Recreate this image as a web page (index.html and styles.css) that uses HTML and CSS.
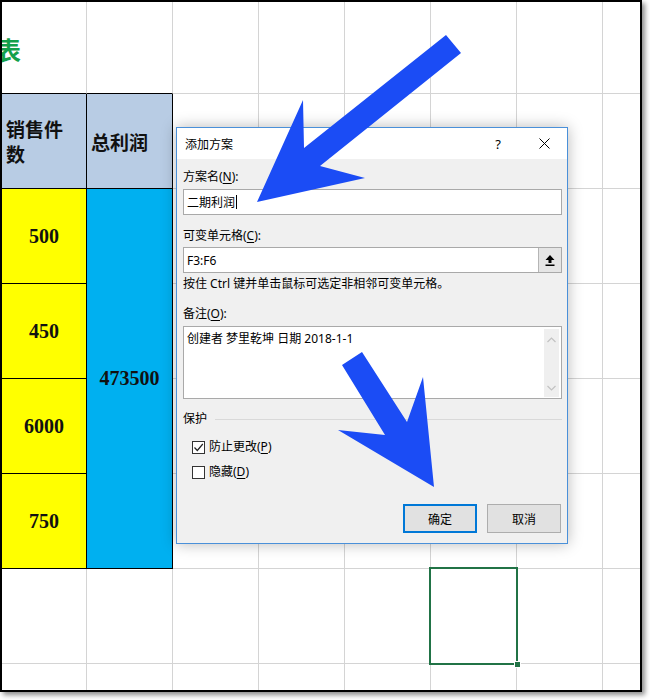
FILE: index.html
```html
<!DOCTYPE html>
<html lang="zh-CN">
<head>
<meta charset="utf-8">
<title>添加方案</title>
<link rel="stylesheet" href="styles.css">
</head>
<body>
<div class="screen">
  <div class="sheet">
    <div class="c title tb"><span class="title-char">表</span></div>
    <div class="c tb"></div><div class="c"></div><div class="c"></div><div class="c"></div><div class="c"></div><div class="c"></div><div class="c nr"></div>

    <div class="c hd hd-a">销售件数</div>
    <div class="c hd hd-b">总利润</div>
    <div class="c"></div><div class="c"></div><div class="c"></div><div class="c"></div><div class="c"></div><div class="c nr"></div>

    <div class="c y num">500</div>
    <div class="c cy num merged">473500</div>
    <div class="c"></div><div class="c"></div><div class="c"></div><div class="c"></div><div class="c"></div><div class="c nr"></div>

    <div class="c y num">450</div>
    <div class="c"></div><div class="c"></div><div class="c"></div><div class="c"></div><div class="c"></div><div class="c nr"></div>

    <div class="c y num">6000</div>
    <div class="c"></div><div class="c"></div><div class="c"></div><div class="c"></div><div class="c"></div><div class="c nr"></div>

    <div class="c y num">750</div>
    <div class="c"></div><div class="c"></div><div class="c"></div><div class="c"></div><div class="c"></div><div class="c nr"></div>

    <div class="c"></div><div class="c"></div><div class="c"></div><div class="c"></div><div class="c"></div>
    <div class="c selected"><span class="handle"></span></div>
    <div class="c"></div><div class="c nr"></div>

    <div class="c nb"></div><div class="c nb"></div><div class="c nb"></div><div class="c nb"></div><div class="c nb"></div><div class="c nb"></div><div class="c nb"></div><div class="c nb nr"></div>
  </div>

  <div class="dialog">
    <div class="titlebar">
      <span class="dtitle">添加方案</span>
      <span class="help">?</span>
      <span class="close">
        <svg width="11" height="11" viewBox="0 0 11 11"><path d="M0.5 0.5 L10.5 10.5 M10.5 0.5 L0.5 10.5" stroke="#000" stroke-width="1" fill="none"/></svg>
      </span>
    </div>
    <div class="dbody">
      <div class="label l1">方案名(<u>N</u>):</div>
      <div class="field f1"><span>二期利润</span><span class="caret"></span></div>
      <div class="label l2">可变单元格(<u>C</u>):</div>
      <div class="field f2">
        <span class="ftext">F3:F6</span>
        <span class="refbtn">
          <svg width="10" height="11" viewBox="0 0 10 11"><path d="M5 0 L9.5 5 L6.5 5 L6.5 8 L3.5 8 L3.5 5 L0.5 5 Z" fill="#000"/><rect x="0.5" y="9.5" width="9" height="1.5" fill="#000"/></svg>
        </span>
      </div>
      <div class="hint">按住 Ctrl 键并单击鼠标可选定非相邻可变单元格。</div>
      <div class="label l3">备注(<u>O</u>):</div>
      <div class="memo">
        <span class="mtext">创建者 梦里乾坤 日期 2018-1-1</span>
        <span class="scroll">
          <svg width="9" height="6" viewBox="0 0 9 6"><path d="M0.5 5 L4.5 1 L8.5 5" stroke="#c2c2c2" stroke-width="1.2" fill="none"/></svg>
          <svg width="9" height="6" viewBox="0 0 9 6"><path d="M0.5 1 L4.5 5 L8.5 1" stroke="#c2c2c2" stroke-width="1.2" fill="none"/></svg>
        </span>
      </div>
      <div class="group"><span>保护</span><span class="rule"></span></div>
      <div class="check c1"><span class="box"><svg width="11" height="11" viewBox="0 0 11 11"><path d="M1.5 5.5 L4.3 8.5 L9.8 2" stroke="#222" stroke-width="1.2" fill="none"/></svg></span>防止更改(<u>P</u>)</div>
      <div class="check c2"><span class="box"></span>隐藏(<u>D</u>)</div>
      <div class="buttons"><span class="btn primary">确定</span><span class="btn">取消</span></div>
    </div>
  </div>

  <svg class="arrows" width="650" height="700" viewBox="0 0 650 700">
    <polygon points="446,35 461,53 320,166 365,178 257,202 303,100 304,148" fill="#1b4cf5"/>
    <polygon points="342,365 362,352 407,422 423,377 434,487 338,430 385,435" fill="#1b4cf5"/>
  </svg>
</div>
</body>
</html>
```

FILE: styles.css
```css
* { box-sizing: border-box; }

body {
  margin: 0;
  background: #fff;
  font-family: "Noto Sans", "Noto Sans CJK SC", sans-serif;
}

.screen {
  position: relative;
  width: 650px;
  height: 700px;
  overflow: hidden;
  background: #fff;
}

.sheet {
  width: 642px;
  height: 692px;
  border: 2px solid #000;
  display: grid;
  grid-template-columns: 85px repeat(6, 86px) 37px;
  grid-template-rows: 92px repeat(6, 95px) 26px;
  background: #fff;
  box-shadow: 3px 3px 5px rgba(0, 0, 0, 0.45);
}

.c {
  border-right: 1px solid #d4d4d4;
  border-bottom: 1px solid #d4d4d4;
  min-width: 0;
}
.c.nr { border-right: none; }
.c.nb { border-bottom: none; }
.c.tb { border-bottom-color: #000; }

.title {
  overflow: hidden;
  display: flex;
  align-items: center;
  padding-top: 3px;
}
.title-char {
  margin-left: -6px;
  font-family: "Noto Sans CJK SC", sans-serif;
  font-weight: 700;
  font-size: 25px;
  color: #13a04b;
  line-height: 1;
}

.hd {
  background: #b8cce4;
  border-right-color: #000;
  border-bottom-color: #000;
  font-family: "Noto Sans CJK SC", sans-serif;
  font-weight: 700;
  font-size: 19px;
  line-height: 25px;
  color: #111;
  display: flex;
  align-items: center;
}
.hd-a { padding: 0 8px 0 4px; }
.hd-b { padding: 0 0 0 4px; }

.y {
  background: #ffff00;
  border-right-color: #000;
  border-bottom-color: #000;
}
.cy {
  background: #00b0f0;
  border-right-color: #000;
  border-bottom-color: #000;
}
.merged { grid-row: span 4; }

.num {
  display: flex;
  align-items: center;
  justify-content: center;
  font-family: "Liberation Serif", serif;
  font-weight: 700;
  font-size: 20px;
  color: #111;
}

.selected { position: relative; }
.selected::after {
  content: "";
  position: absolute;
  left: -2px;
  top: -2px;
  right: -2px;
  bottom: -2px;
  border: 2px solid #217346;
}
.handle {
  position: absolute;
  right: -5px;
  bottom: -5px;
  width: 7px;
  height: 7px;
  background: #217346;
  border: 1px solid #fff;
  z-index: 2;
}

/* dialog */
.dialog {
  position: absolute;
  left: 176px;
  top: 127px;
  width: 392px;
  height: 417px;
  border: 1px solid #4a90d9;
  background: #f0f0f0;
  box-shadow: 0 0 14px rgba(0, 0, 0, 0.28);
  font-family: "Noto Sans", "Noto Sans CJK SC", sans-serif;
  font-size: 12px;
  color: #000;
}

.titlebar {
  height: 31px;
  background: #fff;
  display: flex;
  align-items: center;
  padding-left: 8px;
}
.dtitle {
  font-family: "Noto Sans CJK SC", sans-serif;
  font-size: 12px;
  flex: 1;
}
.help {
  font-size: 13px;
  width: 10px;
  margin-right: 36px;
  text-align: center;
}
.close {
  width: 11px;
  height: 11px;
  margin-right: 17px;
  display: flex;
}

.dbody {
  padding: 0 5px 0 6px;
  display: flex;
  flex-direction: column;
}

.label, .hint, .group, .check {
  line-height: 16px;
  height: 16px;
  white-space: nowrap;
}
.label u, .check u { text-underline-offset: 2px; }

.l1 { margin-top: 10px; }
.l2 { margin-top: 13px; }
.l3 { margin-top: 14px; }
.hint { margin-top: 3px; }

.field {
  height: 26px;
  background: #fff;
  border: 1px solid #a9a9a9;
  display: flex;
  align-items: center;
  padding-left: 3px;
}
.f1 { margin-top: 4px; }
.f2 { margin-top: 3px; padding-right: 0; }
.caret {
  display: inline-block;
  width: 1px;
  height: 14px;
  background: #000;
  margin-left: 1px;
}
.ftext { flex: 1; }
.refbtn {
  width: 23px;
  height: 24px;
  background: #e5e5e5;
  border-left: 1px solid #b5b5b5;
  display: flex;
  align-items: center;
  justify-content: center;
}

.memo {
  margin-top: 4px;
  height: 73px;
  background: #fff;
  border: 1px solid #a9a9a9;
  display: flex;
  padding: 3px 2px 2px 3px;
}
.mtext { flex: 1; line-height: 18px; }
.scroll {
  width: 15px;
  background: #efefef;
  display: flex;
  flex-direction: column;
  justify-content: space-between;
  align-items: center;
  padding: 8px 0 6px;
  margin-top: -1px;
  margin-bottom: -1px;
}

.group {
  margin-top: 12px;
  display: flex;
  align-items: center;
}
.rule {
  flex: 1;
  height: 1px;
  background: #d9d9d9;
  margin-left: 8px;
}

.check {
  display: flex;
  align-items: center;
  padding-left: 9px;
}
.c1 { margin-top: 12px; }
.c2 { margin-top: 9px; }
.box {
  width: 13px;
  height: 13px;
  border: 1px solid #333;
  background: #fff;
  margin-right: 4px;
  display: flex;
  align-items: center;
  justify-content: center;
}

.buttons {
  margin-top: 24px;
  display: flex;
  justify-content: flex-end;
  gap: 10px;
  padding-right: 1px;
}
.btn {
  width: 74px;
  height: 29px;
  background: #e1e1e1;
  border: 1px solid #adadad;
  display: flex;
  align-items: center;
  justify-content: center;
  font-family: "Noto Sans CJK SC", sans-serif;
  font-size: 12px;
}
.btn.primary { border: 2px solid #0078d7; }

.arrows {
  position: absolute;
  left: 0;
  top: 0;
  pointer-events: none;
}
```
